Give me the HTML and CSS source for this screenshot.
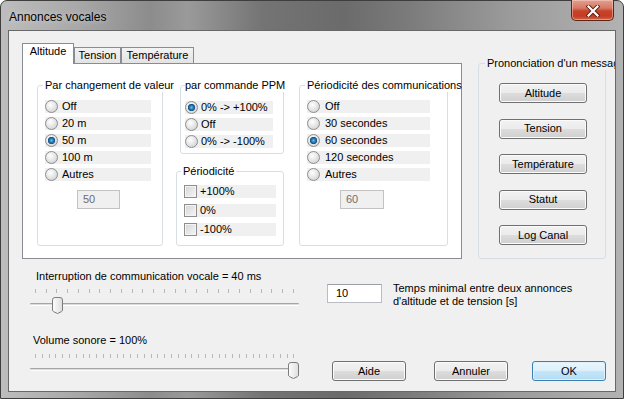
FILE: index.html
```html
<!DOCTYPE html>
<html lang="fr">
<head>
    <meta charset="UTF-8">
    <meta name="viewport" content="width=device-width, initial-scale=1.0">
    <title>Annonces vocales</title>
    <link rel="stylesheet" href="styles.css">
</head>
<body>
    <div class="window">
        <div class="titlebar">
            <span class="title">Annonces vocales</span>
            <div class="close">
                <svg width="14" height="12" viewBox="0 0 14 12">
                    <path d="M2.5 1.5 L11.5 10.5 M11.5 1.5 L2.5 10.5" stroke="#5a1c10" stroke-width="4" stroke-linecap="square"/>
                    <path d="M2.5 1.5 L11.5 10.5 M11.5 1.5 L2.5 10.5" stroke="#fff" stroke-width="2.2" stroke-linecap="square"/>
                </svg>
            </div>
        </div>

        <div class="client">
            <div class="top">
                <div class="tabs">
                    <div class="tabstrip">
                        <div class="tab active">Altitude</div>
                        <div class="tab t-tension">Tension</div>
                        <div class="tab t-temp">Température</div>
                    </div>
                    <div class="panel">
                        <fieldset class="group g-change">
                            <legend>Par changement de valeur</legend>
                            <div class="opts">
                                <div class="opt"><span class="radio"></span>Off</div>
                                <div class="opt"><span class="radio"></span>20 m</div>
                                <div class="opt"><span class="radio on"></span>50 m</div>
                                <div class="opt"><span class="radio"></span>100 m</div>
                                <div class="opt"><span class="radio"></span>Autres</div>
                            </div>
                            <div class="field off">50</div>
                        </fieldset>

                        <div class="col">
                            <fieldset class="group g-ppm">
                                <legend>par commande PPM</legend>
                                <div class="opts">
                                    <div class="opt"><span class="radio on"></span>0% -&gt; +100%</div>
                                    <div class="opt"><span class="radio"></span>Off</div>
                                    <div class="opt"><span class="radio"></span>0% -&gt; -100%</div>
                                </div>
                            </fieldset>
                            <fieldset class="group g-period">
                                <legend>Périodicité</legend>
                                <div class="opts">
                                    <div class="opt"><span class="check"></span>+100%</div>
                                    <div class="opt"><span class="check"></span>0%</div>
                                    <div class="opt"><span class="check"></span>-100%</div>
                                </div>
                            </fieldset>
                        </div>

                        <fieldset class="group g-comm">
                            <legend>Périodicité des communications</legend>
                            <div class="opts">
                                <div class="opt"><span class="radio"></span>Off</div>
                                <div class="opt"><span class="radio"></span>30 secondes</div>
                                <div class="opt"><span class="radio on"></span>60 secondes</div>
                                <div class="opt"><span class="radio"></span>120 secondes</div>
                                <div class="opt"><span class="radio"></span>Autres</div>
                            </div>
                            <div class="field off">60</div>
                        </fieldset>
                    </div>
                </div>

                <fieldset class="group g-say">
                    <legend>Prononciation d'un message</legend>
                    <div class="say-buttons">
                        <button class="btn">Altitude</button>
                        <button class="btn">Tension</button>
                        <button class="btn">Température</button>
                        <button class="btn">Statut</button>
                        <button class="btn">Log Canal</button>
                    </div>
                </fieldset>
            </div>

            <div class="bottom">
                <div class="sliders">
                    <div class="label l-interrupt">Interruption de communication vocale = 40 ms</div>
                    <div class="slider s-interrupt">
                        <div class="ticks"></div>
                        <div class="track"></div>
                        <svg class="thumb" style="left: 22px" width="11" height="17" viewBox="0 0 11 17">
                            <defs>
                                <linearGradient id="tg1" x1="0" y1="0" x2="1" y2="0">
                                    <stop offset="0" stop-color="#fdfdfd"/>
                                    <stop offset="1" stop-color="#dedede"/>
                                </linearGradient>
                            </defs>
                            <path d="M0.5 3 Q0.5 0.5 3 0.5 H8 Q10.5 0.5 10.5 3 V13 Q10.5 14 9.5 14.6 L5.5 16.5 L1.5 14.6 Q0.5 14 0.5 13 Z" fill="url(#tg1)" stroke="#7c7c7c"/>
                        </svg>
                    </div>

                    <div class="label l-volume">Volume sonore = 100%</div>
                    <div class="slider s-volume">
                        <div class="ticks"></div>
                        <div class="track"></div>
                        <svg class="thumb" style="left: 258px" width="11" height="17" viewBox="0 0 11 17">
                            <defs>
                                <linearGradient id="tg2" x1="0" y1="0" x2="1" y2="0">
                                    <stop offset="0" stop-color="#fdfdfd"/>
                                    <stop offset="1" stop-color="#dedede"/>
                                </linearGradient>
                            </defs>
                            <path d="M0.5 3 Q0.5 0.5 3 0.5 H8 Q10.5 0.5 10.5 3 V13 Q10.5 14 9.5 14.6 L5.5 16.5 L1.5 14.6 Q0.5 14 0.5 13 Z" fill="url(#tg2)" stroke="#7c7c7c"/>
                        </svg>
                    </div>
                </div>

                <div class="side">
                    <div class="delay">
                        <div class="field">10</div>
                        <div class="delay-text">Temps minimal entre deux annonces<br>d'altitude et de tension [s]</div>
                    </div>
                    <div class="actions">
                        <button class="btn b-help">Aide</button>
                        <button class="btn b-cancel">Annuler</button>
                        <button class="btn b-ok default">OK</button>
                    </div>
                </div>
            </div>
        </div>
    </div>
</body>
</html>
```

FILE: styles.css
```css
body {
    margin: 0;
    background: #fff;
    font-family: "Liberation Sans", Arial, sans-serif;
    font-size: 11px;
    color: #000;
}
.window {
    width: 624px;
    height: 399px;
    box-sizing: border-box;
    border: 1px solid #3e3e3e;
    border-radius: 7px 7px 0 0;
    padding: 0 7px 6px 7px;
    display: flex;
    flex-direction: column;
    background: linear-gradient(90deg, #bdbdbd 0%, #a9a9a9 12%, #8c8c8c 24%, #9a9a9a 30%, #747474 42%, #6b6b6b 55%, #7c7c7c 66%, #9b9b9b 82%, #b2b2b2 100%);
}

/* title bar */
.titlebar {
    height: 29px;
    display: flex;
    justify-content: space-between;
    align-items: flex-start;
}
.title {
    font-size: 12px;
    line-height: 14px;
    margin: 9px 0 0 1px;
    color: #000;
    text-shadow: 0 0 6px rgba(255, 255, 255, 0.6);
}
.close {
    width: 43px;
    height: 21px;
    box-sizing: border-box;
    margin: -1px 2px 0 0;
    border: 1px solid #5d2418;
    border-top: none;
    border-radius: 0 0 5px 5px;
    background: linear-gradient(#e2a192 0%, #d77965 40%, #c7432a 55%, #c53c22 80%, #d0634a 100%);
    box-shadow: inset 0 0 0 1px rgba(255, 220, 210, 0.45);
    display: flex;
    justify-content: center;
    align-items: center;
    padding-top: 1px;
}

/* client area */
.client {
    flex: 1;
    background: #f0f0f0;
    border: 1px solid #686868;
    overflow: hidden;
    display: flex;
    flex-direction: column;
}
.top {
    display: flex;
    align-items: flex-start;
    padding: 12px 0 0 13px;
}

/* tabs */
.tabs {
    width: 440px;
}
.tabstrip {
    display: flex;
    align-items: flex-end;
    height: 20px;
}
.tab {
    box-sizing: border-box;
    height: 16px;
    border: 1px solid #898c95;
    border-bottom: none;
    background: linear-gradient(#f3f3f3, #e3e3e3);
    text-align: center;
    line-height: 14px;
}
.tab.active {
    position: relative;
    z-index: 1;
    width: 52px;
    height: 21px;
    margin-bottom: -1px;
    background: #fff;
    line-height: 15px;
}
.t-tension {
    width: 47px;
}
.t-temp {
    width: 73px;
}
.panel {
    height: 196px;
    box-sizing: border-box;
    border: 1px solid #898c95;
    background: #fff;
    display: flex;
    align-items: flex-start;
    padding-left: 14px;
}

/* group boxes */
.group {
    margin: 0;
    box-sizing: border-box;
    min-width: 0;
    border: 1px solid #d5dfe5;
    border-radius: 3px;
    padding: 8px 0 0 7px;
}
.group legend {
    padding: 0 2px;
    margin-left: -2px;
    line-height: 13px;
    white-space: nowrap;
}
.opts {
    display: flex;
    flex-direction: column;
    gap: 4px;
}
.opt {
    height: 13px;
    display: flex;
    align-items: center;
    background: #f0f0f0;
    line-height: 13px;
}
.radio {
    width: 13px;
    height: 13px;
    box-sizing: border-box;
    border: 1px solid #8d8e90;
    border-radius: 50%;
    margin-right: 4px;
    flex: none;
    background: radial-gradient(circle at 40% 35%, #ffffff 0%, #e2e2e2 55%, #c9c9c9 100%);
}
.radio.on {
    background:
        radial-gradient(circle at 50% 50%, #6cc0ee 0, #2a7fb8 1.8px, #134f82 3.4px, rgba(19, 79, 130, 0) 3.9px),
        radial-gradient(circle at 40% 35%, #ffffff 0%, #e2e2e2 55%, #c9c9c9 100%);
}
.check {
    width: 13px;
    height: 13px;
    box-sizing: border-box;
    border: 1px solid #8d8e90;
    margin-right: 3px;
    flex: none;
    background: linear-gradient(135deg, #d4d4d4, #f7f7f7);
    box-shadow: inset 0 0 0 1px #f4f4f4;
}
.field {
    box-sizing: border-box;
    width: 44px;
    height: 19px;
    border: 1px solid #b9bcc2;
    border-top-color: #9a9ea6;
    background: #fff;
    line-height: 17px;
    padding-left: 5px;
}
.field.off {
    background: #f0f0f0;
    border-color: #c3c3c3;
    color: #6d6d6d;
    margin-top: 9px;
}

.g-change {
    width: 126px;
    height: 167px;
    margin-top: 15px;
}
.g-change .opt {
    width: 106px;
}
.g-change .field {
    margin-left: 32px;
    width: 43px;
}
.col {
    width: 108px;
    margin: 15px 0 0 13px;
    display: flex;
    flex-direction: column;
    align-items: flex-end;
}
.g-ppm {
    width: 104px;
    height: 75px;
    padding: 9px 0 0 4px;
}
.g-ppm legend {
    margin-left: 0;
    padding: 0 1px 0 0;
}
.g-ppm .opt {
    width: 88px;
}
.g-ppm .radio {
    margin-right: 3px;
}
.g-period {
    width: 108px;
    height: 81px;
    margin-top: 11px;
    padding: 7px 0 0 7px;
}
.g-period legend {
    margin-left: -3px;
}
.g-period .opts {
    gap: 6px;
}
.g-period .opt {
    width: 92px;
}
.g-comm {
    width: 149px;
    height: 167px;
    margin: 15px 0 0 15px;
}
.g-comm .opt {
    width: 123px;
}
.g-comm .radio {
    margin-right: 5px;
}
.g-comm .field {
    margin-left: 33px;
}

/* right group */
.g-say {
    width: 128px;
    height: 202px;
    margin: 14px 0 0 16px;
    padding: 13px 0 0 20px;
}
.g-say legend {
    margin-left: -14px;
}
.say-buttons {
    display: flex;
    flex-direction: column;
    gap: 15.5px;
}

/* buttons */
.btn {
    box-sizing: border-box;
    width: 88px;
    height: 20px;
    padding: 0;
    border: 1px solid #707070;
    border-radius: 3px;
    background: linear-gradient(#f2f2f2 0%, #ebebeb 50%, #dddddd 51%, #cfcfcf 100%);
    box-shadow: inset 0 0 0 1px #fbfbfb;
    font-family: inherit;
    font-size: 11px;
    color: #000;
    line-height: 17px;
}
.btn.default {
    border-color: #3c7fb1;
    background: linear-gradient(#eaf6fd 0%, #dcf0fb 50%, #c6e6f8 51%, #b3dcf3 100%);
    box-shadow: inset 0 0 0 1px #dff1fc;
}

/* bottom part */
.bottom {
    flex: 1;
    display: flex;
}
.sliders {
    width: 269px;
    margin-left: 21px;
}
.label {
    line-height: 13px;
}
.l-interrupt {
    margin-top: 11px;
    padding-left: 6px;
}
.l-volume {
    margin-top: 19px;
    padding-left: 3px;
}
.slider {
    position: relative;
    height: 26px;
    margin-top: 6px;
}
.s-volume {
    margin-top: 7px;
}
.ticks {
    height: 4px;
    margin: 1px 4px 0 5px;
    background: repeating-linear-gradient(90deg, #b8b8b8 0 1px, transparent 1px 10.75px);
}
.s-volume .ticks {
    background: repeating-linear-gradient(90deg, #b8b8b8 0 1px, transparent 1px 6.8px);
}
.track {
    height: 3px;
    margin-top: 10px;
    box-sizing: border-box;
    border-top: 1px solid #a6a6a6;
    border-bottom: 1px solid #fdfdfd;
    background: #dcdcdc;
    border-radius: 1px;
}
.thumb {
    position: absolute;
    top: 8px;
}

.side {
    flex: 1;
    display: flex;
    flex-direction: column;
    justify-content: space-between;
    padding: 23px 0 10px 28px;
}
.delay {
    display: flex;
    align-items: flex-start;
}
.delay .field {
    width: 55px;
    margin-top: 2px;
    padding-left: 8px;
}
.delay-text {
    margin-left: 11px;
    line-height: 13px;
}
.actions {
    display: flex;
}
.actions .btn {
    width: 74px;
}
.b-help {
    margin-left: 5px;
}
.b-cancel {
    margin-left: 28px;
}
.b-ok {
    margin-left: 24px;
}
```
